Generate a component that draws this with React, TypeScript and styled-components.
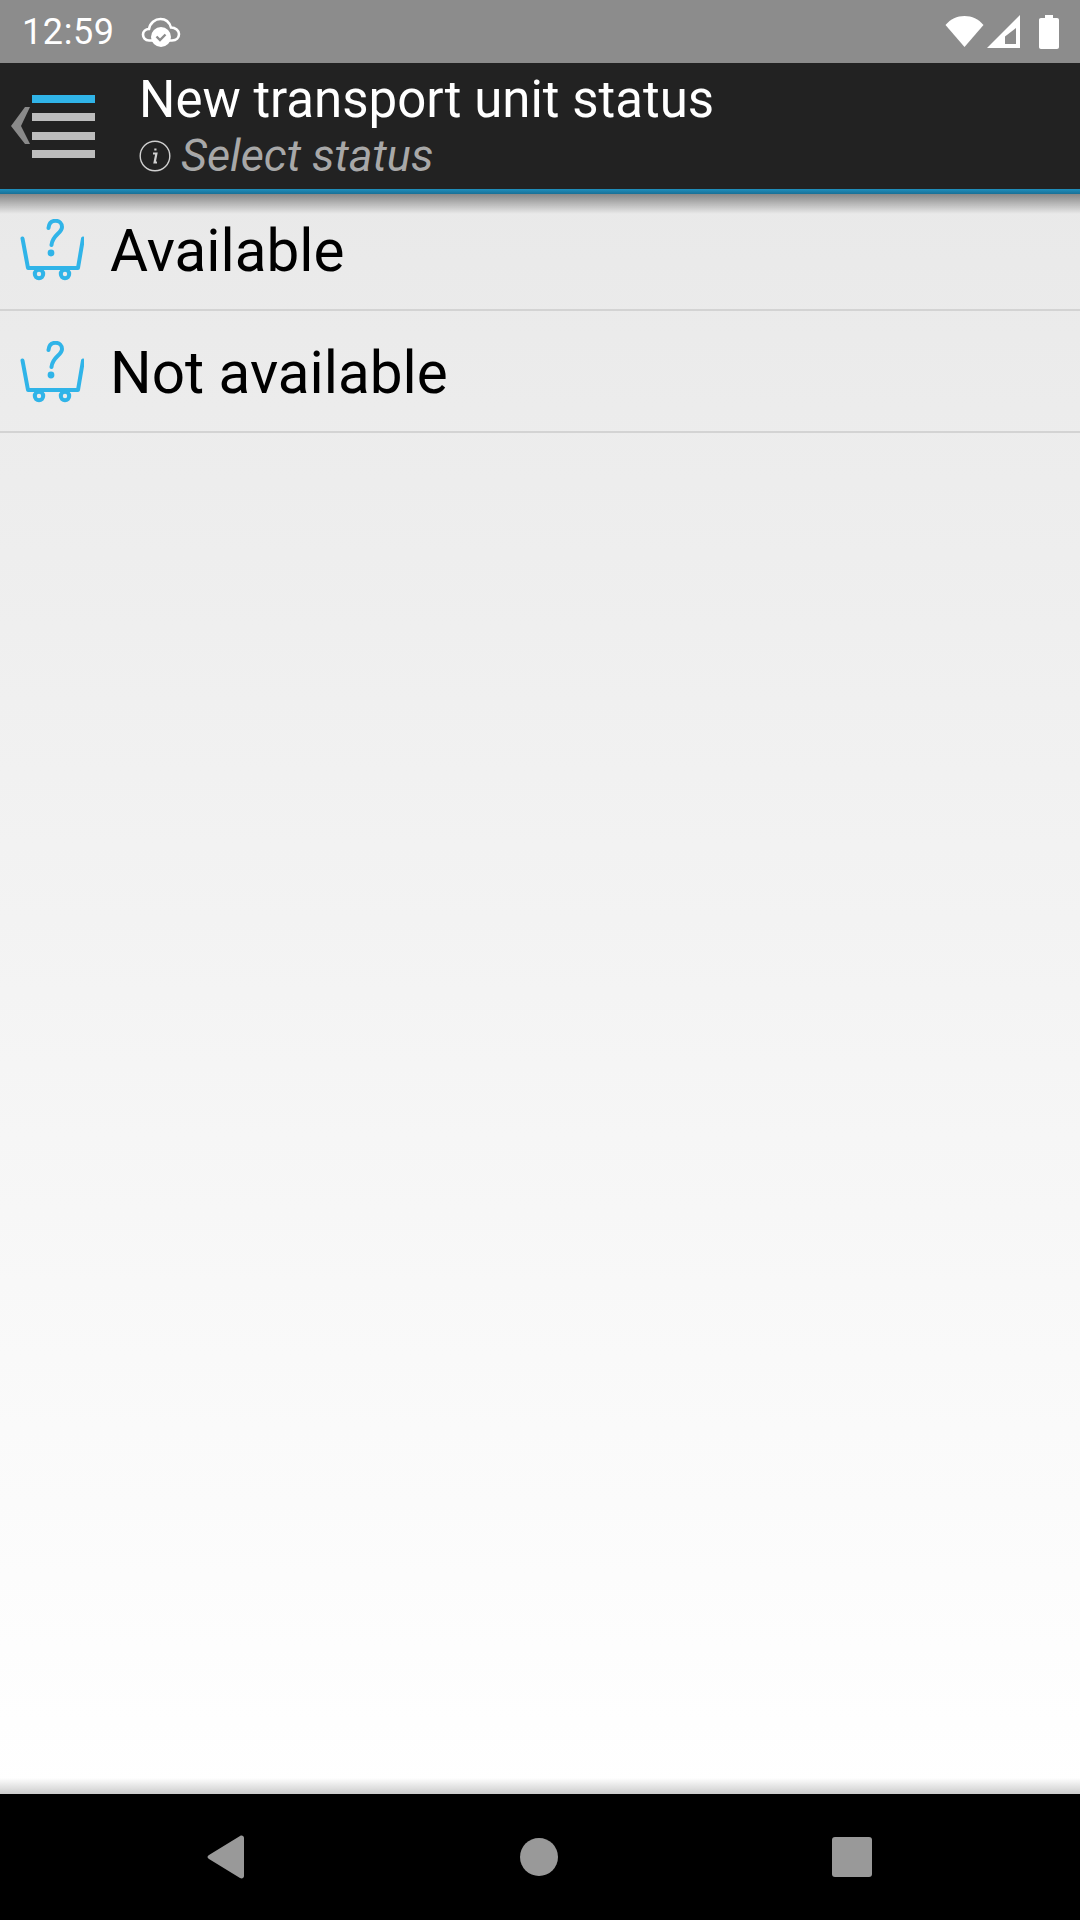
import React from "react";
import styled, { createGlobalStyle } from "styled-components";

const GlobalStyle = createGlobalStyle`
  html, body {
    margin: 0;
    padding: 0;
    font-family: Roboto, "Liberation Sans", sans-serif;
  }
`;

const Screen = styled.div`
  width: 1080px;
  height: 1920px;
  display: flex;
  flex-direction: column;
  overflow: hidden;
`;

const StatusBar = styled.div`
  height: 63px;
  flex: none;
  background: #8c8c8c;
  color: #fff;
  display: flex;
  align-items: center;
  padding: 0 21px 0 22px;
`;

const Clock = styled.span`
  font-size: 36px;
  letter-spacing: 0.6px;
  margin-right: 26px;
`;

const StatusIcons = styled.div`
  margin-left: auto;
  display: flex;
  align-items: center;
  gap: 3px;
`;

const AppBar = styled.header`
  height: 126px;
  flex: none;
  background: #222222;
  display: flex;
  align-items: stretch;
`;

const MenuButton = styled.div`
  width: 139px;
  flex: none;
  display: flex;
  align-items: center;
  padding: 2px 0 0 10px;
  box-sizing: border-box;
`;

const Titles = styled.div`
  display: flex;
  flex-direction: column;
  min-width: 0;
  padding-top: 7px;
`;

const Title = styled.div`
  color: #fff;
  font-size: 51px;
  line-height: 60px;
`;

const Subtitle = styled.div`
  display: flex;
  align-items: center;
  gap: 10px;
  color: #a8a8a8;
  font-size: 45px;
  font-style: italic;
  line-height: 52px;
`;

const Content = styled.main`
  flex: 1;
  position: relative;
  background: linear-gradient(#e9e9e9 0%, #ffffff 100%);
  &::before {
    content: "";
    position: absolute;
    left: 0;
    right: 0;
    top: 0;
    height: 25px;
    background: linear-gradient(
      #1f8fbd 0,
      #1a7096 5px,
      rgba(0, 0, 0, 0.42) 5px,
      rgba(0, 0, 0, 0) 25px
    );
  }
  &::after {
    content: "";
    position: absolute;
    left: 0;
    right: 0;
    bottom: 0;
    height: 16px;
    background: linear-gradient(rgba(0, 0, 0, 0), rgba(0, 0, 0, 0.2));
  }
`;

const Row = styled.div`
  height: 122px;
  box-sizing: border-box;
  border-bottom: 2px solid #d3d3d3;
  display: flex;
  align-items: center;
  padding: 4px 0 0 20px;
  gap: 26px;
  color: #000;
  font-size: 58.4px;
`;

const CartSvg = styled.svg`
  flex: none;
  margin-top: -3px;
`;

const NavBar = styled.nav`
  height: 126px;
  flex: none;
  background: #000;
  display: flex;
  align-items: center;
  padding: 0 72px 0 70px;
`;

const NavSlot = styled.div`
  flex: 1;
  display: flex;
  justify-content: center;
`;

const CloudIcon = () => (
  <svg width="40" height="32" viewBox="0 0 40 32" fill="none">
    <path
      d="M8 24.5C4 24.5 2 21.5 2 18.5C2 15.5 4.5 13 8 13C9 7 14 3 19.5 3C25 3 28.5 6.5 30 11.5C34.5 11.5 38 14.5 38 18C38 21.5 35.5 24.5 31 24.5H8"
      stroke="#fff"
      strokeWidth="2.6"
    />
    <circle cx="20" cy="21" r="10" fill="#fff" />
    <path d="M15.5 20.5L19 24L24.5 18.5" stroke="#8c8c8c" strokeWidth="2.4" />
  </svg>
);

const WifiIcon = () => (
  <svg width="39" height="33" viewBox="0 0 39 33">
    <path d="M19.5 32L0.5 10C5.5 4 12 1 19.5 1C27 1 33.5 4 38.5 10Z" fill="#fff" />
  </svg>
);

const SignalIcon = () => (
  <svg width="33" height="33" viewBox="0 0 33 33">
    <path d="M0 33H33V0Z" fill="#fff" />
    <path d="M18 29H29V13L18 21.5Z" fill="#8c8c8c" />
  </svg>
);

const BatteryIcon = () => (
  <svg width="20" height="34" viewBox="0 0 20 34" style={{ marginLeft: 16 }}>
    <path
      d="M6 0H14V3H18C19.2 3 20 3.8 20 5V32C20 33.2 19.2 34 18 34H2C0.8 34 0 33.2 0 32V5C0 3.8 0.8 3 2 3H6Z"
      fill="#fff"
    />
  </svg>
);

const MenuIcon = () => (
  <svg width="86" height="64" viewBox="0 0 86 64">
    <path d="M15 12H20L11 31L20 49H15L1 31Z" fill="#8a8a8a" />
    <rect x="22" y="0" width="63" height="8" fill="#30b4e8" />
    <rect x="22" y="18" width="63" height="8" fill="#bdbdbd" />
    <rect x="22" y="37" width="63" height="8" fill="#bdbdbd" />
    <rect x="22" y="55" width="63" height="8" fill="#bdbdbd" />
  </svg>
);

const InfoIcon = () => (
  <svg width="32" height="32" viewBox="0 0 32 32" fill="none">
    <circle cx="16" cy="16" r="14.8" stroke="#d0d0d0" strokeWidth="1.4" />
    <path
      d="M14 13.5H17.4L15.6 22.5H18M16.4 8.5V10.6"
      stroke="#d0d0d0"
      strokeWidth="2.2"
    />
  </svg>
);

const CartIcon = () => (
  <CartSvg
    width="64"
    height="62"
    viewBox="0 0 64 62"
    fill="none"
    stroke="#30b4e8"
    strokeWidth="4"
    strokeLinecap="round"
    strokeLinejoin="round"
  >
    <path d="M2.5 19.5L8 49H58L63 19.5" />
    <circle cx="19" cy="55" r="4.2" />
    <circle cx="45" cy="55" r="4.2" />
    <path d="M28.5 9C29 4 32 1.8 35.5 1.8C39.5 1.8 42 4.5 42 8C42 14.5 32.5 15.5 31.5 26" />
    <circle cx="31" cy="34" r="1.4" fill="#30b4e8" />
  </CartSvg>
);

const BackIcon = () => (
  <svg width="38" height="44" viewBox="0 0 38 44">
    <path
      d="M2 20L33 1C35 0 37 1 37 3V41C37 43 35 44 33 43L2 24C0 23 0 21 2 20Z"
      fill="#999"
    />
  </svg>
);

const HomeDot = styled.div`
  width: 38px;
  height: 38px;
  border-radius: 50%;
  background: #999;
`;

const RecentSquare = styled.div`
  width: 40px;
  height: 40px;
  border-radius: 3px;
  background: #999;
`;

const App: React.FC = () => (
  <>
    <GlobalStyle />
    <Screen>
      <StatusBar>
        <Clock>12:59</Clock>
        <CloudIcon />
        <StatusIcons>
          <WifiIcon />
          <SignalIcon />
          <BatteryIcon />
        </StatusIcons>
      </StatusBar>
      <AppBar>
        <MenuButton>
          <MenuIcon />
        </MenuButton>
        <Titles>
          <Title>New transport unit status</Title>
          <Subtitle>
            <InfoIcon />
            Select status
          </Subtitle>
        </Titles>
      </AppBar>
      <Content>
        <Row>
          <CartIcon />
          Available
        </Row>
        <Row>
          <CartIcon />
          Not available
        </Row>
      </Content>
      <NavBar>
        <NavSlot>
          <BackIcon />
        </NavSlot>
        <NavSlot>
          <HomeDot />
        </NavSlot>
        <NavSlot>
          <RecentSquare />
        </NavSlot>
      </NavBar>
    </Screen>
  </>
);

export default App;
